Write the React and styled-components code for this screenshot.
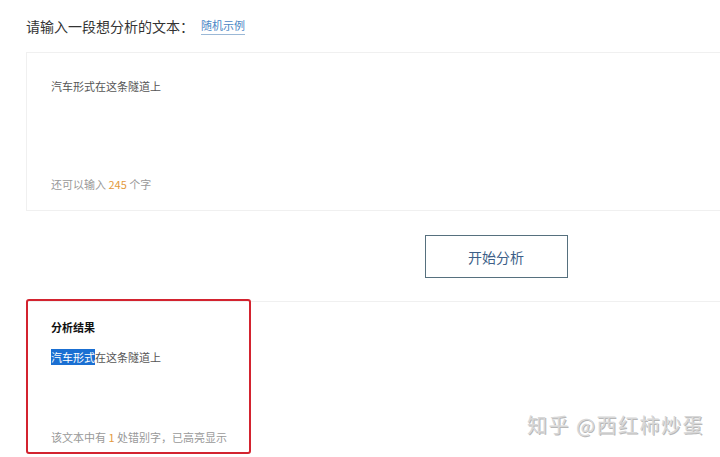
import styled, { createGlobalStyle } from "styled-components";

const GlobalStyle = createGlobalStyle`
  body {
    margin: 0;
    background: #fff;
    overflow: hidden;
    font-family: "Noto Sans CJK SC", "Noto Sans", sans-serif;
  }
`;

function App() {
  return (
    <Page>
      <GlobalStyle />
      <Main>
        <TitleRow>
          <Title>请输入一段想分析的文本：</Title>
          <SampleLink>随机示例</SampleLink>
        </TitleRow>
        <InputCard>
          <InputText>汽车形式在这条隧道上</InputText>
          <Hint>
            还可以输入 <Num>245</Num> 个字
          </Hint>
        </InputCard>
        <ButtonRow>
          <StartButton>开始分析</StartButton>
        </ButtonRow>
        <ResultSection>
          <ResultTitle>分析结果</ResultTitle>
          <ResultText>
            <Mark>汽车形式</Mark>在这条隧道上
          </ResultText>
          <Hint>
            该文本中有 <Num>1</Num> 处错别字，已高亮显示
          </Hint>
          <RedFrame />
        </ResultSection>
      </Main>
      <Watermark>知乎 @西红柿炒蛋</Watermark>
    </Page>
  );
}

const Page = styled.div`
  position: relative;
  width: 720px;
  height: 457px;
  overflow: hidden;
`;

const Main = styled.div`
  width: 940px;
  margin-left: 26px;
`;

const TitleRow = styled.div`
  display: flex;
  align-items: center;
  height: 52px;
`;

const Title = styled.span`
  font-size: 14px;
  color: #333;
`;

const SampleLink = styled.span`
  margin-left: 7px;
  font-size: 11px;
  color: #4a86c5;
  padding-bottom: 2px;
  border-bottom: 1px solid #9bb8d6;
  line-height: 14px;
`;

const InputCard = styled.div`
  display: flex;
  flex-direction: column;
  box-sizing: border-box;
  height: 159px;
  border: 1px solid #f0f0f0;
  padding: 25px 24px 18px;
`;

const InputText = styled.div`
  font-size: 11px;
  line-height: 16px;
  color: #555;
`;

const Hint = styled.div`
  margin-top: auto;
  font-size: 11px;
  line-height: 16px;
  color: #999;
`;

const Num = styled.span`
  color: #e49a3c;
`;

const ButtonRow = styled.div`
  display: flex;
  justify-content: center;
  padding: 24px 0 23px;
`;

const StartButton = styled.button`
  width: 143px;
  height: 43px;
  background: #fff;
  border: 1px solid #56707e;
  color: #3d5f88;
  font-family: inherit;
  font-size: 14px;
  cursor: pointer;
`;

const ResultSection = styled.div`
  position: relative;
  display: flex;
  flex-direction: column;
  box-sizing: border-box;
  height: 152px;
  border-top: 1px solid #f0f0f0;
  padding: 17px 25px 8px;
`;

const ResultTitle = styled.div`
  font-size: 11px;
  line-height: 16px;
  font-weight: 700;
  color: #111;
`;

const ResultText = styled.div`
  margin-top: 14px;
  font-size: 11px;
  line-height: 16px;
  color: #555;
`;

const Mark = styled.span`
  background: #1a6fd2;
  color: #fff;
`;

const RedFrame = styled.div`
  position: absolute;
  left: 0;
  top: -3px;
  width: 225px;
  height: 155px;
  box-sizing: border-box;
  border: 2px solid #d3232f;
  border-radius: 3px;
  pointer-events: none;
`;

const Watermark = styled.div`
  position: absolute;
  right: 16px;
  bottom: 18px;
  font-size: 20px;
  color: #d8d8d8;
  text-shadow: 1px 1px 0 #b8b8b8;
  letter-spacing: 1.5px;
`;

export default App;
